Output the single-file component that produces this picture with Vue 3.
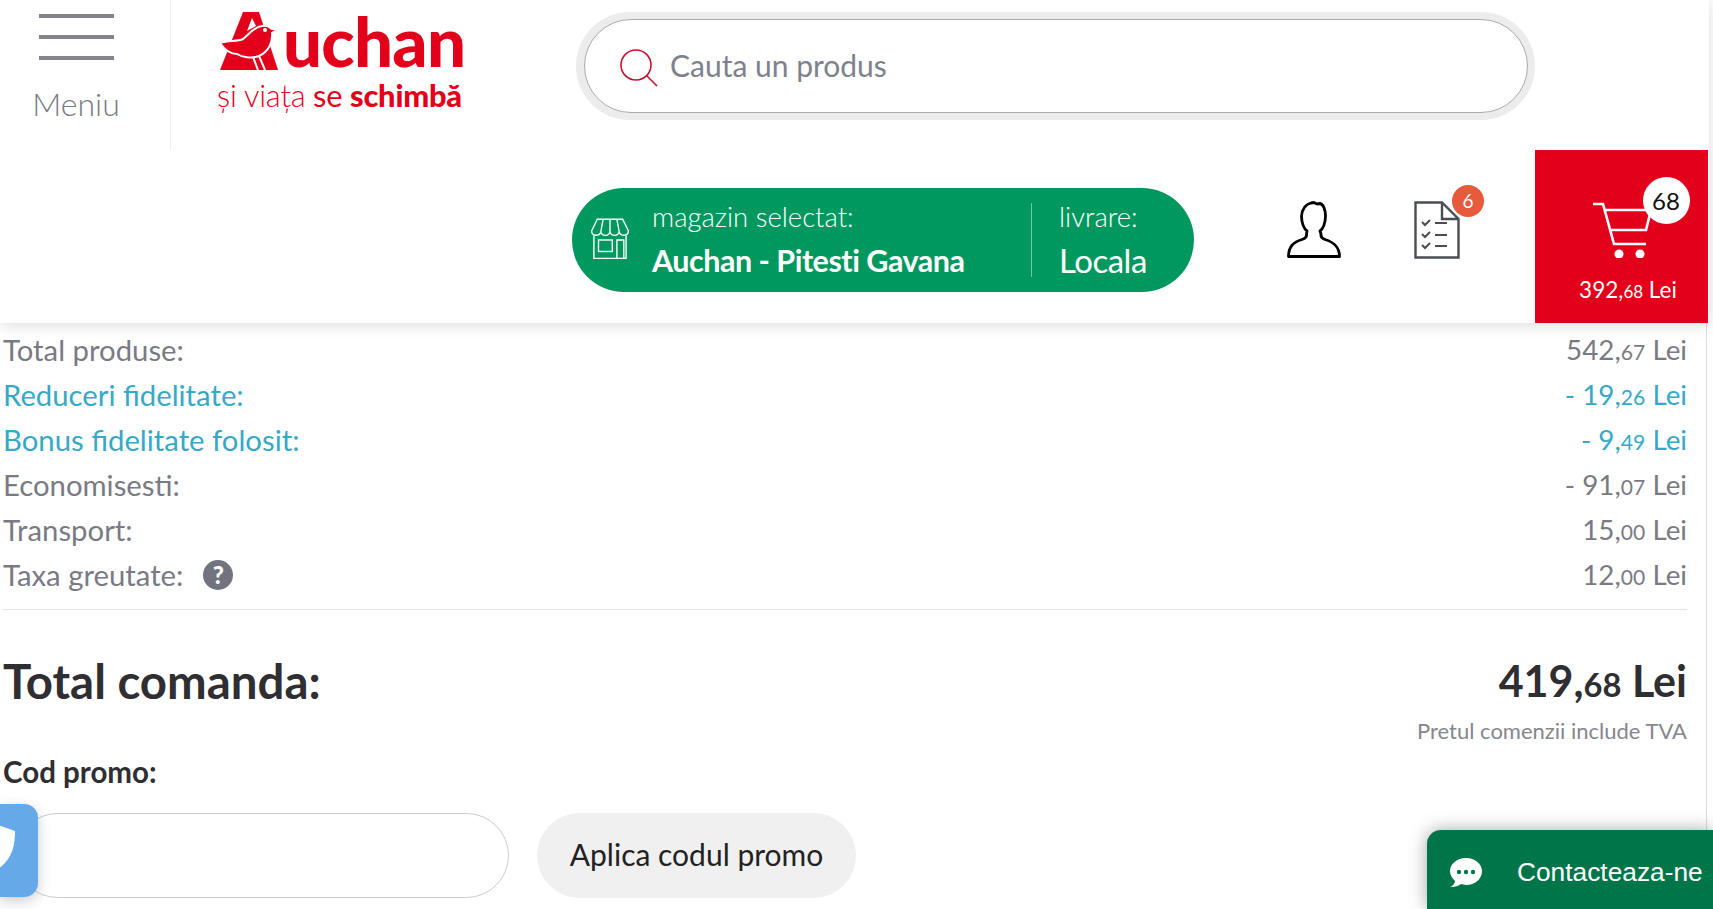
<script setup>
const rows = [
  { label: 'Total produse:', int: '542,', dec: '67', cls: '' },
  { label: 'Reduceri fidelitate:', int: '- 19,', dec: '26', cls: 'blue' },
  { label: 'Bonus fidelitate folosit:', int: '- 9,', dec: '49', cls: 'blue' },
  { label: 'Economisesti:', int: '- 91,', dec: '07', cls: '' },
  { label: 'Transport:', int: '15,', dec: '00', cls: '' },
  { label: 'Taxa greutate:', int: '12,', dec: '00', cls: '', help: true }
]
</script>

<template>
  <div class="page">
    <header class="header">
      <div class="top">
        <div class="menu">
          <div class="burger"><i></i><i></i><i></i></div>
          <span class="menu-label">Meniu</span>
        </div>
        <div class="logo">
          <div class="logo-main">
            <svg class="bird" viewBox="0 0 64 58" width="64" height="58">
              <path d="M23 0H39L58 58H0Z" fill="#e2001a"/>
              <path d="M32 6L27 19L36 14Z" fill="#fff"/>
              <path d="M0 31C9 28 17 30 23 27C29 23 33 15 42 14C47 13 50 15 52 17L58 17L52 21C53 31 48 40 39 44C31 47 22 45 17 42C9 42 4 37 0 31Z" fill="#e2001a" stroke="#fff" stroke-width="2"/>
              <circle cx="45" cy="18" r="2" fill="#fff"/>
              <path d="M33 45L38 58M39 44L45 58" stroke="#fff" stroke-width="2" fill="none"/>
            </svg>
            <span class="logo-word">uchan</span>
          </div>
          <div class="logo-sub"><span class="thin">și viața</span> se <b>schimbă</b></div>
        </div>
        <div class="search">
          <div class="search-inner">
            <svg class="search-icon" viewBox="0 0 38 38" width="38" height="38" fill="none" stroke="#c8102e" stroke-width="1.6">
              <circle cx="16" cy="16" r="15"/>
              <path d="M26.5 26.5L37 37"/>
            </svg>
            <span class="placeholder">Cauta un produs</span>
          </div>
        </div>
      </div>
      <div class="bottom">
        <div class="pill">
          <svg class="shop" viewBox="0 0 36 40" width="46" height="46" fill="none" stroke="#fff" stroke-width="1.2">
            <path d="M7 2H29L34 12C34 17 27 17 26 13C25 17 19 17 18 13C17 17 11 17 10 13C9 17 2 17 2 12Z"/>
            <path d="M10 13L12 2M26 13L24 2M18 13V2"/>
            <path d="M4 16V36H32V16"/>
            <rect x="8" y="20" width="12" height="10"/>
            <path d="M24 36V20H30V36"/>
          </svg>
          <div class="pill-col store">
            <span class="pill-small">magazin selectat:</span>
            <span class="pill-big">Auchan - Pitesti Gavana</span>
          </div>
          <div class="pill-col delivery">
            <span class="pill-small">livrare:</span>
            <span class="pill-big">Locala</span>
          </div>
        </div>
        <svg class="user" viewBox="0 0 54 57" width="54" height="57" fill="none" stroke="#000" stroke-width="2.8" stroke-linejoin="round">
          <path d="M1.5 55.5H52.5C52.5 45 46 41 38 38.5C35 37.5 33.5 36 34 33L33 30C36 28 38.5 22 38.5 15C38.5 8 36 3 33 2.5L30 3L27 1.5L24 2C19 3 15 8 14.5 15C14.5 22 17 28 20 30L19.5 33C20 36 18 37.5 15 38.5C7 41 1.5 45 1.5 55.5Z"/>
        </svg>
        <div class="orders">
          <svg viewBox="0 0 46 58" width="46" height="58" fill="none" stroke="#4b4d55" stroke-width="2.4">
            <path d="M1.5 1.5H28L44.5 18V56.5H1.5Z"/>
            <path d="M28 1.5V18H44.5"/>
            <path d="M8 21L11 24L16 19M8 33L11 36L16 31M8 44L11 47L16 42" stroke-width="2"/>
            <path d="M21 22H33M21 34H33M21 45H33" stroke-width="2"/>
          </svg>
          <span class="orders-badge">6</span>
        </div>
        <div class="cart">
          <div class="cart-icon">
            <svg viewBox="0 0 62 56" width="62" height="56" fill="none" stroke="#fff" stroke-width="2.6">
              <path d="M0 2H10L21 42H53"/>
              <path d="M12 8H58L53 28H16"/>
              <circle cx="26" cy="52" r="4.5" fill="#fff" stroke="none"/>
              <circle cx="47" cy="52" r="4.5" fill="#fff" stroke="none"/>
            </svg>
            <span class="cart-count">68</span>
          </div>
          <div class="cart-total">392,<small>68</small> Lei</div>
        </div>
      </div>
    </header>

    <main class="summary">
      <div v-for="r in rows" :key="r.label" class="row" :class="r.cls">
        <span class="row-label">
          {{ r.label }}
          <span v-if="r.help" class="help">?</span>
        </span>
        <span class="price">{{ r.int }}<small>{{ r.dec }}</small> Lei</span>
      </div>
      <div class="total">
        <span>Total comanda:</span>
        <span class="total-price">419,<small>68</small> Lei</span>
      </div>
      <div class="vat">Pretul comenzii include TVA</div>
      <div class="promo-label">Cod promo:</div>
      <div class="promo">
        <div class="promo-input"></div>
        <button class="promo-btn">Aplica codul promo</button>
      </div>
    </main>

    <div class="shield">
      <svg viewBox="0 0 40 50" width="40" height="50">
        <path d="M20 0L40 7C40 25 36 40 14 50C-4 40 -8 25 -8 7Z" fill="#fff"/>
      </svg>
    </div>
    <div class="contact">
      <svg viewBox="0 0 32 30" width="32" height="30">
        <path d="M16 0C7 0 0 6 0 13C0 17 2 20 5 23C5 25 3 28 0 29C5 29 9 28 11 26C13 26 14 27 16 27C25 27 32 21 32 13C32 6 25 0 16 0Z" fill="#fff"/>
        <circle cx="9" cy="14" r="2.2" fill="#00754a"/>
        <circle cx="16" cy="14" r="2.2" fill="#00754a"/>
        <circle cx="23" cy="14" r="2.2" fill="#00754a"/>
      </svg>
      <span>Contacteaza-ne</span>
    </div>
  </div>
</template>

<style>
html, body { margin: 0; background: #fff; overflow: hidden; }
</style>

<style scoped>
.page {
  width: 1713px;
  height: 909px;
  overflow: hidden;
  position: relative;
  font-family: Lato, "Open Sans", sans-serif;
  color: #7a7a84;
  background: #fff;
}
.header {
  width: 1709px;
  height: 323px;
  box-shadow: 0 2px 14px rgba(0,0,0,.14);
  position: relative;
  z-index: 2;
  background: #fff;
  display: flex;
  flex-direction: column;
}
.top { height: 150px; display: flex; }
.menu {
  width: 171px;
  box-sizing: border-box;
  border-right: 1px solid #eee;
  display: flex;
  flex-direction: column;
  align-items: center;
  padding: 14px 18px 0 0;
}
.burger { width: 75px; height: 46px; display: flex; flex-direction: column; justify-content: space-between; }
.burger i { display: block; height: 4px; background: #83838d; }
.menu-label { margin-top: 26px; font-size: 32px; line-height: 36px; font-weight: 300; color: #777a84; }
.logo { width: 243px; margin-left: 48px; padding-top: 12px; color: #e2001a; }
.logo-main { display: flex; align-items: flex-end; height: 58px; }
.bird { flex: none; margin-left: 1px; }
.logo-word {
  font-size: 69px;
  font-weight: 900;
  line-height: 58px;
  letter-spacing: -.75px;
  margin-left: -1px;
  font-family: Lato, sans-serif;
}
.logo-sub { margin: 10px 0 0 -2px; font-size: 30.8px; line-height: 32px; white-space: nowrap; letter-spacing: -.2px; }
.logo-sub .thin { font-weight: 300; }
.logo-sub b { font-weight: 900; }
.search {
  margin: 12px 0 0 114px;
  width: 959px;
  height: 108px;
  box-sizing: border-box;
  background: #ececec;
  border-radius: 54px;
  padding: 7px 7px 7px 8px;
}
.search-inner {
  height: 94px;
  box-sizing: border-box;
  background: #fff;
  border: 1px solid #aaa;
  border-radius: 47px;
  display: flex;
  align-items: center;
  padding-left: 35px;
}
.search-icon { flex: none; margin-top: 4px; }
.placeholder { margin: -2px 0 0 12px; font-size: 30px; color: #7e828c; }
.bottom { height: 173px; display: flex; align-items: flex-start; }
.pill {
  margin: 38px 0 0 572px;
  width: 622px;
  height: 104px;
  background: #00985f;
  border-radius: 52px;
  color: #fff;
  display: flex;
  align-items: center;
  box-sizing: border-box;
  padding-left: 18px;
}
.shop { flex: none; margin-left: -3px; }
.pill-col { display: flex; flex-direction: column; gap: 9px; }
.store { margin-left: 19px; width: 379px; }
.delivery { border-left: 1px solid rgba(255,255,255,.45); padding-left: 27px; height: 74px; justify-content: center; }
.pill-small { font-size: 27.5px; line-height: 32px; font-weight: 300; white-space: nowrap; margin-top: -2px; }
.pill-big { font-size: 30.5px; line-height: 36px; font-weight: 700; white-space: nowrap; letter-spacing: -.5px; }
.delivery .pill-big { font-weight: 400; font-size: 33px; }
.user { margin: 51px 0 0 93px; flex: none; }
.orders { margin: 51px 0 0 73px; position: relative; width: 46px; height: 58px; }
.orders-badge {
  position: absolute;
  top: -16px;
  left: 38px;
  width: 32px;
  height: 32px;
  border-radius: 50%;
  background: #e85a3c;
  color: #fff;
  font-size: 19px;
  line-height: 32px;
  text-align: center;
}
.cart {
  margin-left: 75px;
  width: 173px;
  height: 173px;
  background: #e2001a;
  color: #fff;
  display: flex;
  flex-direction: column;
  align-items: center;
}
.cart-icon { position: relative; margin: 52px -4px 0 0; width: 62px; height: 56px; }
.cart-icon svg { display: block; }
.cart-count {
  position: absolute;
  top: -25px;
  left: 50px;
  width: 47px;
  height: 47px;
  border-radius: 50%;
  background: #fff;
  color: #111;
  font-size: 24px;
  line-height: 47px;
  text-align: center;
}
.cart-total { margin: 17px -13px 0 0; font-size: 22.5px; line-height: 30px; white-space: nowrap; }
.cart-total small { font-size: 17px; }
.summary { width: 1707px; height: 586px; box-sizing: border-box; border-right: 1px solid #ddd; padding: 4px 19px 0 3px; }
.row {
  display: flex;
  justify-content: space-between;
  align-items: center;
  height: 45px;
  font-size: 29.3px;
  color: #7a7a84;
  white-space: nowrap;
}
.row.blue { color: #35a9c6; }
.row-label { display: flex; align-items: center; gap: 20px; }
.price { font-size: 27.8px; }
.price small, .total small { font-size: .76em; }
.help {
  width: 30px;
  height: 30px;
  border-radius: 50%;
  background: #71747f;
  color: #fff;
  font-size: 24px;
  font-weight: 900;
  line-height: 30px;
  text-align: center;
}
.total {
  margin-top: 12px;
  border-top: 1px solid #e4e4e4;
  padding-top: 44px;
  height: 54px;
  display: flex;
  justify-content: space-between;
  align-items: center;
  font-size: 47.4px;
  line-height: 54px;
  font-weight: 700;
  color: #2e2e33;
}
.total-price { font-size: 43px; margin-top: 3px; }
.vat { text-align: right; margin-top: 8px; font-size: 22px; line-height: 30px; color: #86868e; }
.promo-label { margin-top: 8px; font-size: 29.5px; line-height: 36px; font-weight: 700; color: #2e2e33; }
.promo { margin-top: 23px; display: flex; gap: 28px; }
.promo-input {
  margin-left: 12px;
  width: 494px;
  height: 85px;
  box-sizing: border-box;
  border: 1px solid #ccc;
  border-radius: 43px;
}
.promo-btn {
  width: 319px;
  height: 85px;
  border: 0;
  border-radius: 43px;
  background: #f0f0f0;
  color: #222;
  padding: 0 0 3px;
  font: 400 30px Lato, sans-serif;
}
.shield {
  position: absolute;
  z-index: 3;
  left: -1px;
  top: 804px;
  width: 39px;
  height: 93px;
  background: #65a9e8;
  border-radius: 0 14px 14px 0;
  box-shadow: 0 4px 14px rgba(0,0,0,.2);
  overflow: hidden;
}
.shield svg { position: absolute; left: -24px; top: 20px; }
.contact {
  position: absolute;
  z-index: 3;
  left: 1427px;
  top: 830px;
  width: 286px;
  height: 79px;
  background: #00754a;
  border-radius: 14px 0 0 0;
  box-shadow: 0 0 18px rgba(0,0,0,.35);
  color: #fff;
  display: flex;
  align-items: flex-start;
  padding: 26px 0 0 23px;
  box-sizing: border-box;
  font: 400 26.3px "Liberation Sans", sans-serif;
}
.contact svg { margin-top: 2px; }
.contact span { margin-left: 35px; line-height: 32px; white-space: nowrap; }
</style>
